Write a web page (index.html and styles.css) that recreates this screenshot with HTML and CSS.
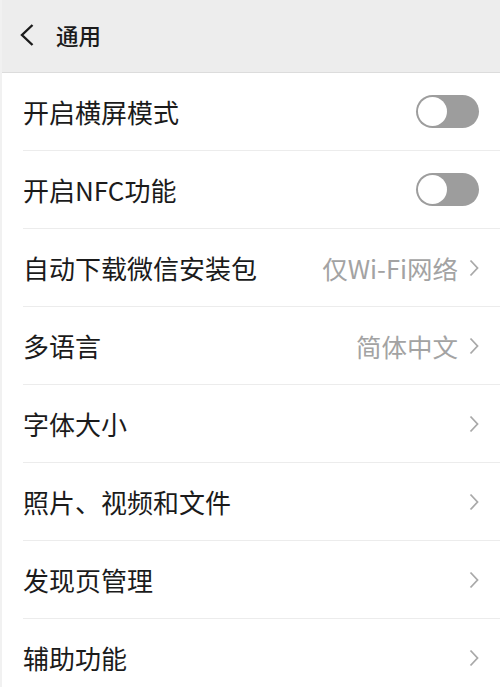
FILE: index.html
```html
<!DOCTYPE html>
<html lang="zh">
<head>
    <meta charset="UTF-8">
    <meta name="viewport" content="width=device-width, initial-scale=1.0">
    <title>通用</title>
    <link rel="stylesheet" href="styles.css">
</head>
<body>
    <div class="page">
        <!-- top bar -->
        <div class="topbar">
            <svg class="back" width="16" height="24" viewBox="0 0 16 24">
                <path d="M13.5 2 L3 12 L13.5 22" fill="none" stroke="#1b1b1b" stroke-width="2.4"/>
            </svg>
            <span class="title">通用</span>
        </div>

        <div class="list">
            <div class="row">
                <span class="label">开启横屏模式</span>
                <span class="switch"><span class="knob"></span></span>
            </div>
            <div class="row">
                <span class="label">开启NFC功能</span>
                <span class="switch"><span class="knob"></span></span>
            </div>
            <div class="row">
                <span class="label">自动下载微信安装包</span>
                <span class="value">仅Wi-Fi网络</span>
                <svg class="arrow" width="10" height="18" viewBox="0 0 10 18"><path d="M1.5 1.5 L8.5 9 L1.5 16.5" fill="none" stroke="#a9a9a9" stroke-width="1.8"/></svg>
            </div>
            <div class="row">
                <span class="label">多语言</span>
                <span class="value">简体中文</span>
                <svg class="arrow" width="10" height="18" viewBox="0 0 10 18"><path d="M1.5 1.5 L8.5 9 L1.5 16.5" fill="none" stroke="#a9a9a9" stroke-width="1.8"/></svg>
            </div>
            <div class="row">
                <span class="label">字体大小</span>
                <svg class="arrow" width="10" height="18" viewBox="0 0 10 18"><path d="M1.5 1.5 L8.5 9 L1.5 16.5" fill="none" stroke="#a9a9a9" stroke-width="1.8"/></svg>
            </div>
            <div class="row">
                <span class="label">照片、视频和文件</span>
                <svg class="arrow" width="10" height="18" viewBox="0 0 10 18"><path d="M1.5 1.5 L8.5 9 L1.5 16.5" fill="none" stroke="#a9a9a9" stroke-width="1.8"/></svg>
            </div>
            <div class="row">
                <span class="label">发现页管理</span>
                <svg class="arrow" width="10" height="18" viewBox="0 0 10 18"><path d="M1.5 1.5 L8.5 9 L1.5 16.5" fill="none" stroke="#a9a9a9" stroke-width="1.8"/></svg>
            </div>
            <div class="row">
                <span class="label">辅助功能</span>
                <svg class="arrow" width="10" height="18" viewBox="0 0 10 18"><path d="M1.5 1.5 L8.5 9 L1.5 16.5" fill="none" stroke="#a9a9a9" stroke-width="1.8"/></svg>
            </div>
        </div>
    </div>
</body>
</html>
```

FILE: styles.css
```css
body {
    margin: 0;
    background-color: #ffffff;
    font-family: "Noto Sans CJK SC", "Noto Sans", sans-serif;
    color: #1b1b1b;
}

.page {
    width: 500px;
    height: 687px;
    overflow: hidden;
    border-left: 2px solid #f1f1f1;
    box-sizing: border-box;
}

.topbar {
    height: 73px;
    box-sizing: border-box;
    display: flex;
    align-items: center;
    background-color: #ededed;
    border-bottom: 1px solid #dcdcdc;
    padding-left: 17px;
    padding-bottom: 2px;
}

.back {
    margin-right: 21px;
}

.title {
    font-size: 22.5px;
    font-weight: 500;
    color: #1b1b1b;
}

.list {
    padding-left: 21px;
}

.row {
    height: 78px;
    box-sizing: border-box;
    display: flex;
    align-items: center;
    border-bottom: 1px solid #ececec;
    padding-right: 21px;
}

.label {
    flex: 1;
    font-size: 26px;
}

.value {
    font-size: 25.5px;
    color: #a3a3a3;
    margin-right: 11px;
}

.switch {
    width: 63px;
    height: 33px;
    border-radius: 17px;
    background-color: #9d9d9d;
    box-sizing: border-box;
    padding: 2px;
}

.knob {
    display: block;
    width: 29px;
    height: 29px;
    border-radius: 50%;
    background-color: #ffffff;
}
```
